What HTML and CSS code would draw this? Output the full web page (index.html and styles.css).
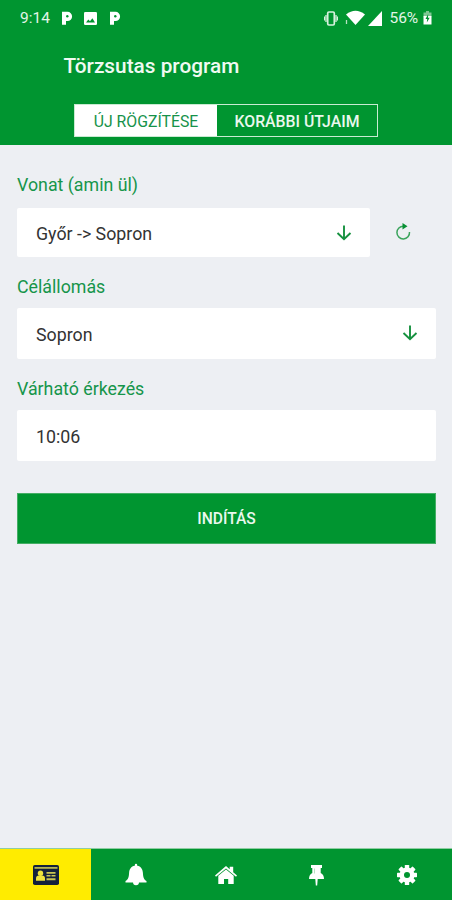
FILE: index.html
```html
<!DOCTYPE html>
<html lang="hu">
<head>
<meta charset="utf-8">
<title>Törzsutas program</title>
<link rel="stylesheet" href="styles.css">
</head>
<body>
<div class="app">
  <header class="header">
    <div class="status">
      <span class="clock">9:14</span>
      <svg class="logo" width="12" height="14" viewBox="0 0 12 14"><path d="M1 .8h5.500a4.600 4.600 0 0 1 0 9.200H5v3.700H1z" fill="#fff"/><circle cx="6.300" cy="5.200" r="1.200" fill="#009530"/></svg>
      <svg class="photo" width="13" height="13" viewBox="0 0 13 13"><rect width="13" height="13" rx="1.300" fill="#fff"/><path d="M2 10.500 4.300 7.600 6 9.300 8.400 6.300 11 10.500z" fill="#009530"/></svg>
      <svg class="logo" width="12" height="14" viewBox="0 0 12 14"><path d="M1 .8h5.500a4.600 4.600 0 0 1 0 9.200H5v3.700H1z" fill="#fff"/><circle cx="6.300" cy="5.200" r="1.200" fill="#009530"/></svg>
      <span class="spacer"></span>
      <svg class="vibrate" width="14" height="15" viewBox="0 0 14 15" fill="none" stroke="#d8f2df" stroke-width="1.300"><rect x="3.700" y="1" width="6.600" height="13" rx="1.200" stroke-width="1.700"/><path d="M2 4v7M12 4v7M.4 5.500v4M13.600 5.500v4"/></svg>
      <svg class="wifi" width="20" height="16" viewBox="0 0 20 16"><path d="M1 4.500Q10.500-3 20 4.500L10.500 15z" fill="#fff"/><path d="M1.500 10v4" stroke="#b5e3c2" stroke-width="1.300"/></svg>
      <svg class="signal" width="14" height="15" viewBox="0 0 14 15"><path d="M14 0v15H0z" fill="#fff"/></svg>
      <span class="percent">56%</span>
      <svg class="battery" width="9" height="14" viewBox="0 0 9 14"><path d="M3 0h3v1.500h2.500v4H.5v-4H3z" fill="#7fc794"/><path d="M.5 5h8v8.500h-8z" fill="#fff"/><path d="M5.200 3 2.500 8h1.700L3.800 11.500 6.700 6.800H5z" fill="#009530"/></svg>
    </div>
    <h1 class="title">Törzsutas program</h1>
    <div class="tabs">
      <div class="tab tab-active"><span>ÚJ RÖGZÍTÉSE</span></div>
      <div class="tab"><span>KORÁBBI ÚTJAIM</span></div>
    </div>
  </header>
  <main class="form">
    <div class="label label-train">Vonat (amin ül)</div>
    <div class="row">
      <div class="field"><span class="value-train">Győr -&gt; Sopron</span>
        <svg class="arrow" width="16" height="16" viewBox="0 0 16 16"><path d="M8 .5v14M1.500 8 8 14.300 14.500 8" fill="none" stroke="#16913f" stroke-width="1.900"/></svg>
      </div>
      <svg class="reload" width="18" height="18" viewBox="0 0 18 18"><path d="M9.500 3.300A6.300 6.300 0 1 0 15.500 9" fill="none" stroke="#3ba45c" stroke-width="1.500"/><path d="M8.500 0 13.500 3.300 8.500 6.500z" fill="#079033"/></svg>
    </div>
    <div class="label label-station">Célállomás</div>
    <div class="field"><span class="value-station">Sopron</span>
      <svg class="arrow" width="16" height="16" viewBox="0 0 16 16"><path d="M8 .5v14M1.500 8 8 14.300 14.500 8" fill="none" stroke="#16913f" stroke-width="1.900"/></svg>
    </div>
    <div class="label label-arrival">Várható érkezés</div>
    <div class="field"><span class="value-time">10:06</span></div>
    <div class="button"><span>INDÍTÁS</span></div>
  </main>
  <nav class="nav">
    <div class="item item-active"><svg width="26" height="20" viewBox="0 0 26 20"><rect width="26" height="20" rx="1.800" fill="#14213b"/><path d="M1.500 2h23v1.800h-23z" fill="#b5b552"/><circle cx="7.500" cy="8.200" r="2.700" fill="#efe43c"/><path d="M3 15.800v-2.300q0-3 3-3h3q3 0 3 3v2.300z" fill="#efe43c"/><path d="M13.500 7h9v1.700h-9zM13.500 10h4v1.600h-4zM18.500 10h4v1.600h-4zM13.500 13.300h9V15.200h-9z" fill="#c9c454"/></svg></div>
    <div class="item"><svg width="22" height="24" viewBox="0 0 22 24"><path d="M9.800 2a1.200 1.200 0 0 1 2.400 0v.7c3.800.6 5.500 3.500 5.700 7 .2 4.500 1 6.800 3.600 8.300v1.500H.5V18C3.100 16.500 3.900 14.200 4.100 9.700c.2-3.500 1.900-6.400 5.700-7zM8 19.300h6a3 3 0 0 1-6 0z" fill="#fff"/></svg></div>
    <div class="item"><svg width="22" height="18" viewBox="0 0 22 18"><path d="M11 0 14.700 3.200V.7h3.500v5.500L22 9.500 21 10.800 11 2.500 1 10.800 0 9.500z" fill="#fff"/><path d="M11 3.400 18.700 9.800v8.200h-5.500v-5H9v5H3.300v-8.200z" fill="#fff"/></svg></div>
    <div class="item"><svg width="15" height="21" viewBox="0 0 15 21"><path d="M2 0h11v3h-1.300v5q3.300 1.500 3.300 6H8.700L8.200 20.500H6.800L6.300 14H0q0-4.500 3.300-6V3H2z" fill="#fff"/><path d="M5.500 3.500v5" stroke="#b8e2c3" stroke-width="1"/></svg></div>
    <div class="item"><svg width="20" height="20" viewBox="-10 -10 20 20"><g fill="#fff"><rect x="-2.200" y="-10" width="4.400" height="20" rx=".6"/><rect x="-2.200" y="-10" width="4.400" height="20" rx=".6" transform="rotate(45)"/><rect x="-2.200" y="-10" width="4.400" height="20" rx=".6" transform="rotate(90)"/><rect x="-2.200" y="-10" width="4.400" height="20" rx=".6" transform="rotate(135)"/><circle r="7.500"/></g><circle r="3" fill="#009530"/></svg></div>
  </nav>
</div>
</body>
</html>
```

FILE: styles.css
```css
* { box-sizing: border-box; }
body { margin: 0; font-family: Roboto, sans-serif; background: #edeff3; }
svg { display: block; flex: none; }
.app { display: flex; flex-direction: column; width: 452px; height: 900px; overflow: hidden; }
.header { height: 145px; background: #009530; color: #fff; flex: none; }
.status { display: flex; align-items: center; height: 36px; padding: 0 20px 0 20px; font-size: 15.5px; color: #e2f5e7; }
.clock { width: 41px; }
.photo { margin: 0 12px 0 11px; }
.spacer { flex: 1; }
.wifi { margin-left: 7px; }
.signal { margin: 0 8px 0 3px; }
.percent { letter-spacing: -0.1px; }
.battery { margin-left: 5px; }
.title { margin: 16px 0 0 63.5px; font-size: 20.8px; font-weight: 500; line-height: 28px; color: #f0faf2; }
.tabs { display: flex; width: 304px; height: 33px; margin: 24px 0 0 74px; border: 1.5px solid #c9ebd2; }
.tab { display: flex; align-items: center; justify-content: center; flex: 1; padding-top: 1px; font-size: 15.8px; font-weight: 500; white-space: nowrap; color: #eaf8ee; }
.tab-active { flex: 0 0 142px; background: #fff; color: #16924a; font-weight: 400; }
.form { flex: 1; padding: 28px 16px 0 17px; }
.label { height: 24px; line-height: 24px; font-size: 17.8px; color: #16954a; white-space: nowrap; }
.label-station, .label-arrival { margin-top: 17px; }
.label-station, .label-arrival { line-height: 26px; }
.row { display: flex; align-items: center; margin-top: 11px; }
.field { display: flex; align-items: center; justify-content: space-between; height: 51px; margin-top: 10px; padding: 1px 18px 0 19px; background: #fff; border-radius: 2px; color: #333; font-size: 17.8px; white-space: nowrap; }
.row .field { width: 353px; height: 49px; margin-top: 0; padding-top: 2px; }
.row .arrow, .field .arrow { margin-top: -2px; }
.reload { margin: -1px 0 0 24px; }
.button { display: flex; align-items: center; justify-content: center; height: 51px; margin-top: 32px; padding-top: 1px; background: #009530; border: 1px solid #44ae64; color: #eaf8ee; font-size: 15.6px; font-weight: 500; }
.nav { display: flex; height: 52px; border-top: 1px solid #8fcda2; background: #009530; flex: none; }
.item { display: flex; flex: 1; align-items: center; justify-content: center; padding-top: 1px; }
.item-active { flex: 0 0 91px; background: #ffec00; }
```
